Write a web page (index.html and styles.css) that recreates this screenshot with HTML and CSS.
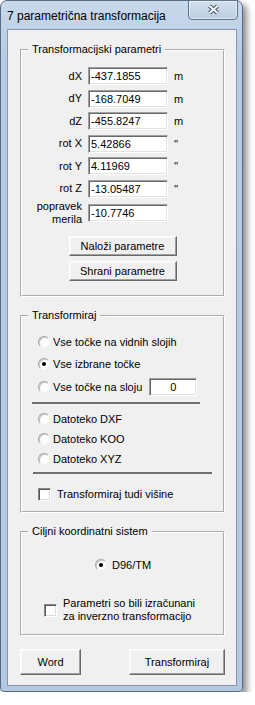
FILE: index.html
```html
<!DOCTYPE html>
<html lang="sl">

<head>
    <meta charset="UTF-8">
    <meta name="viewport" content="width=device-width, initial-scale=1.0">
    <title>7 parametrična transformacija</title>
    <link rel="stylesheet" href="styles.css">
</head>

<body>
    <div class="window">
        <div class="titlebar">
            <span class="caption">7 parametrična transformacija</span>
            <button class="close-btn" title="Zapri">
                <svg width="13" height="11" viewBox="0 0 13 11">
                    <path d="M2.5 2 L10.5 9 M10.5 2 L2.5 9" stroke="#3e4d61" stroke-width="4" fill="none" />
                    <path d="M2.5 2 L10.5 9 M10.5 2 L2.5 9" stroke="#fff" stroke-width="2" fill="none" />
                </svg>
            </button>
        </div>

        <div class="client">
            <!-- parametri -->
            <fieldset class="group group-params">
                <legend>Transformacijski parametri</legend>
                <div class="param-list">
                    <div class="param-row">
                        <label class="param-label">dX</label>
                        <input type="text" class="field param-field" value="-437.1855">
                        <span class="unit">m</span>
                    </div>
                    <div class="param-row">
                        <label class="param-label">dY</label>
                        <input type="text" class="field param-field" value="-168.7049">
                        <span class="unit">m</span>
                    </div>
                    <div class="param-row">
                        <label class="param-label">dZ</label>
                        <input type="text" class="field param-field" value="-455.8247">
                        <span class="unit">m</span>
                    </div>
                    <div class="param-row">
                        <label class="param-label">rot X</label>
                        <input type="text" class="field param-field" value="5.42866">
                        <span class="unit">''</span>
                    </div>
                    <div class="param-row">
                        <label class="param-label">rot Y</label>
                        <input type="text" class="field param-field" value="4.11969">
                        <span class="unit">''</span>
                    </div>
                    <div class="param-row">
                        <label class="param-label">rot Z</label>
                        <input type="text" class="field param-field" value="-13.05487">
                        <span class="unit">''</span>
                    </div>
                    <div class="param-row param-row-scale">
                        <label class="param-label">popravek<br>merila</label>
                        <input type="text" class="field param-field" value="-10.7746">
                        <span class="unit"></span>
                    </div>
                </div>
                <div class="param-actions">
                    <button class="btn btn-params">Naloži parametre</button>
                    <button class="btn btn-params">Shrani parametre</button>
                </div>
            </fieldset>

            <!-- transformiraj -->
            <fieldset class="group group-transform">
                <legend>Transformiraj</legend>
                <div class="opt opt-first"><span class="radio"></span>Vse točke na vidnih slojih</div>
                <div class="opt"><span class="radio checked"></span>Vse izbrane točke</div>
                <div class="opt opt-layer">
                    <span class="radio"></span>Vse točke na sloju
                    <input type="text" class="field layer-field" value="0">
                </div>
                <div class="rule rule-short"></div>
                <div class="opt opt-file"><span class="radio"></span>Datoteko DXF</div>
                <div class="opt opt-file"><span class="radio"></span>Datoteko KOO</div>
                <div class="opt opt-file"><span class="radio"></span>Datoteko XYZ</div>
                <div class="rule rule-long"></div>
                <div class="opt opt-check"><span class="checkbox"></span>Transformiraj tudi višine</div>
            </fieldset>

            <!-- ciljni sistem -->
            <fieldset class="group group-target">
                <legend>Ciljni koordinatni sistem</legend>
                <div class="opt opt-system"><span class="radio checked"></span>D96/TM</div>
                <div class="opt opt-inverse">
                    <span class="checkbox"></span>
                    <span class="inverse-text">Parametri so bili izračunani<br>za inverzno transformacijo</span>
                </div>
            </fieldset>

            <div class="bottom-actions">
                <button class="btn btn-word">Word</button>
                <button class="btn btn-run">Transformiraj</button>
            </div>
        </div>
    </div>
</body>

</html>
```

FILE: styles.css
```css
body {
    margin: 0;
    background-color: #fff;
    font-family: "Liberation Sans", Arial, sans-serif;
    font-size: 11px;
    color: #000;
}

.window {
    box-sizing: border-box;
    width: 243px;
    height: 692px;
    padding: 0 5px 5px 6px;
    border: 1px solid #566b85;
    border-radius: 7px 7px 4px 4px;
    background: linear-gradient(#c9d9ec, #b7cbe2 60px, #b4c8e0);
    box-shadow: 4px 4px 6px rgba(0, 0, 0, 0.45);
}

.titlebar {
    display: flex;
    justify-content: space-between;
    align-items: flex-start;
    height: 28px;
    margin-right: -1px;
}

.caption {
    padding-top: 8px;
    font-size: 12px;
    line-height: 15px;
}

.close-btn {
    display: flex;
    align-items: center;
    justify-content: center;
    box-sizing: border-box;
    width: 50px;
    height: 20px;
    margin-top: -1px;
    padding: 0 0 1px 0;
    border: 1px solid #61758f;
    border-radius: 0 0 4px 4px;
    background: linear-gradient(#d3dfec, #bccee3);
    box-shadow: inset 0 0 0 1px rgba(255, 255, 255, 0.45);
    cursor: pointer;
}

.client {
    box-sizing: border-box;
    height: 657px;
    padding: 13px 11px 0 12px;
    border: 1px solid #8598b0;
    background-color: #f0f0f0;
}

/* group boxes */
.group {
    margin: 0;
    padding: 0;
    border: 2px groove #fff;
    min-width: 0;
}

.group legend {
    margin-left: 6px;
    padding: 0 4px;
    line-height: 13px;
}

.group-transform,
.group-target {
    margin-top: 12px;
}

/* parameters */
.param-list {
    display: flex;
    flex-direction: column;
    gap: 4.5px;
    margin-top: 11px;
}

.param-row {
    display: flex;
    align-items: center;
    height: 18px;
}

.param-row-scale {
    height: 26px;
    margin-top: -2px;
}

.param-label {
    width: 60px;
    text-align: right;
    line-height: 13px;
    flex-shrink: 0;
}

.unit {
    margin-left: 6px;
}

.field {
    box-sizing: border-box;
    height: 18px;
    margin: 0;
    padding: 0 2px;
    border: 1px solid;
    border-color: #a0a0a0 #fff #fff #a0a0a0;
    box-shadow: inset 1px 1px 0 #696969, inset -1px -1px 0 #e3e3e3;
    background-color: #fff;
    font-family: inherit;
    font-size: 11px;
    color: #000;
    outline: none;
}

.param-field {
    width: 80px;
    margin-left: 6px;
}

.param-actions {
    display: flex;
    flex-direction: column;
    align-items: center;
    gap: 5px;
    margin-top: 10px;
    padding-bottom: 14px;
}

/* buttons */
.btn {
    box-sizing: border-box;
    margin: 0;
    padding: 0;
    border: 1px solid;
    border-color: #fff #696969 #696969 #fff;
    box-shadow: inset -1px -1px 0 #a0a0a0, inset 1px 1px 0 #f8f8f8;
    background-color: #f0f0f0;
    font-family: inherit;
    font-size: 11px;
    color: #000;
    cursor: pointer;
}

.btn-params {
    width: 108px;
    height: 20px;
}

/* options */
.opt {
    display: flex;
    align-items: center;
    height: 22px;
    padding-left: 16px;
}

.opt-first {
    margin-top: 9px;
}

.opt-layer {
    height: 24px;
}

.opt-file {
    height: 20px;
}

.opt-file:first-of-type {
    margin-top: 0;
}

.radio {
    position: relative;
    box-sizing: border-box;
    width: 12px;
    height: 12px;
    margin-right: 3px;
    border: 1px solid;
    border-color: #a6a6a6 #f4f4f4 #f4f4f4 #a6a6a6;
    border-radius: 50%;
    background-color: #fdfdfd;
    box-shadow: inset 1px 1px 0 #c8c8c8;
    flex-shrink: 0;
}

.radio.checked::after {
    content: "";
    position: absolute;
    left: 3px;
    top: 3px;
    width: 4px;
    height: 4px;
    border-radius: 50%;
    background-color: #000;
}

.checkbox {
    box-sizing: border-box;
    width: 13px;
    height: 13px;
    margin-right: 6px;
    border: 1px solid;
    border-color: #8a8a8a #fff #fff #8a8a8a;
    box-shadow: inset 1px 1px 0 #555, inset -1px -1px 0 #dcdcdc;
    background-color: #fff;
    flex-shrink: 0;
}

.layer-field {
    width: 48px;
    margin-left: 7px;
    text-align: center;
}

.rule {
    height: 2px;
    margin-top: 3px;
    background-color: #6f6f6f;
}

.rule-short {
    width: 168px;
    margin-left: 10px;
}

.rule + .opt-file {
    margin-top: 5px;
}

.rule-long {
    width: 179px;
    margin-left: 11px;
}

.opt-check {
    height: 20px;
    margin-top: 10px;
    padding-bottom: 7px;
}

/* target system */
.opt-system {
    height: 16px;
    margin-top: 19px;
    padding-left: 73px;
}

.opt-system .radio {
    margin-right: 5px;
}

.opt-inverse {
    height: 26px;
    margin-top: 24px;
    padding-left: 22px;
    padding-bottom: 11px;
}

.inverse-text {
    line-height: 13px;
}

/* bottom buttons */
.bottom-actions {
    display: flex;
    justify-content: space-between;
    margin-top: 13px;
}

.btn-word {
    width: 61px;
    height: 26px;
}

.btn-run {
    width: 96px;
    height: 26px;
}
```
